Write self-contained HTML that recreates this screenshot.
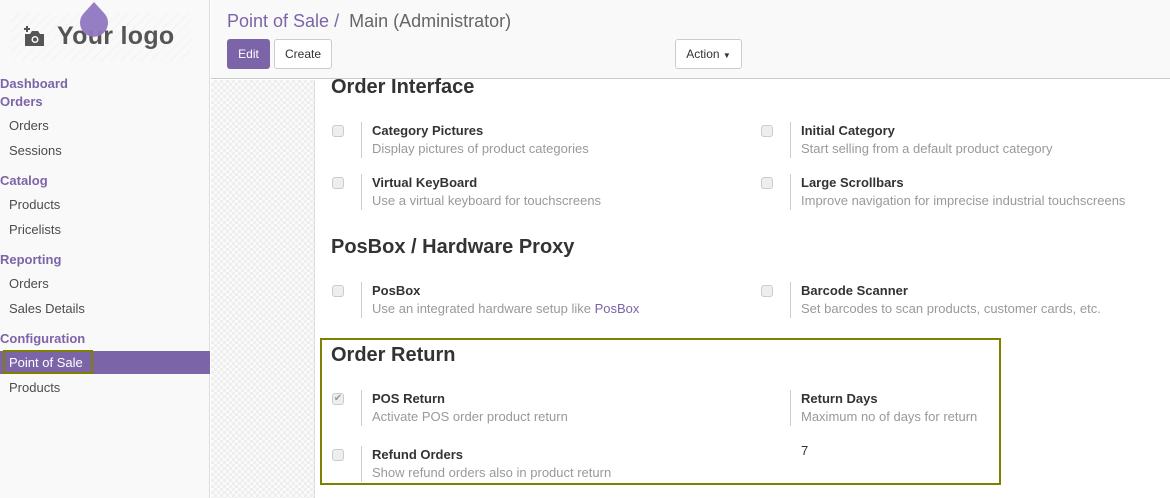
<!DOCTYPE html>
<html><head><style>
*{margin:0;padding:0;box-sizing:border-box}
body{width:1170px;height:498px;overflow:hidden;font-family:"Liberation Sans",sans-serif;font-size:13px;color:#4c4c4c;position:relative;background:#fff}
.a{position:absolute;white-space:nowrap}
#side{position:absolute;left:0;top:0;width:210px;height:498px;background:#f9f9f9;border-right:1px solid #ddd}
.sh{position:absolute;left:0;color:#7c64a8;font-weight:bold;font-size:13px}
.si{position:absolute;left:9px;color:#4c4c4c;font-size:13px}
#hdr{position:absolute;left:211px;top:0;width:959px;height:79px;background:#f9f9f9;border-bottom:1px solid #ccc}
#check{position:absolute;left:211px;top:80px;width:104px;height:418px;border-right:1px solid #ddd;background-color:#fafafa;background-image:linear-gradient(45deg,#eee 25%,transparent 25%,transparent 75%,#eee 75%),linear-gradient(45deg,#eee 25%,transparent 25%,transparent 75%,#eee 75%);background-size:6px 6px;background-position:0 0,3px 3px}
h2{position:absolute;font-size:20px;font-weight:bold;color:#333;white-space:nowrap}
.cb{position:absolute;width:12px;height:12px;border:1px solid #ccc;border-radius:3px;background:#eee}
.ln{position:absolute;width:1px;height:36px;background:#ccc}
.t{position:absolute;font-weight:bold;color:#333;white-space:nowrap}
.d{position:absolute;color:#999;white-space:nowrap}
</style></head><body>
<div id="side">
 <div class="a" style="left:11px;top:13px;width:180px;height:48px;background:repeating-linear-gradient(135deg,#f9f9f9 0 6px,#f2f2f2 6px 7px)"></div>
 <svg class="a" style="left:23px;top:25px" width="24" height="24" viewBox="0 0 24 24"><path d="M2 9h5l2-3h6l2 3h4v12H2z" fill="#555"/><circle cx="12" cy="14.5" r="3.5" fill="#f9f9f9"/><circle cx="12" cy="14.5" r="2" fill="#555"/><path d="M1 4h6M4 1v6" stroke="#555" stroke-width="2"/></svg>
 <div class="a" style="left:57px;top:22px;font-size:25px;font-weight:bold;color:#555;letter-spacing:0.3px">Your logo</div>
 <svg class="a" style="left:79px;top:1px" width="30" height="36" viewBox="0 0 30 36"><path d="M15 1 L25 12 A14 14 0 1 1 5 12 Z" fill="#8f77c0" opacity=".95"/></svg>
 <div class="sh" style="top:76px">Dashboard</div>
 <div class="sh" style="top:94px">Orders</div>
 <div class="si" style="top:118px">Orders</div>
 <div class="si" style="top:143px">Sessions</div>
 <div class="sh" style="top:173px">Catalog</div>
 <div class="si" style="top:197px">Products</div>
 <div class="si" style="top:222px">Pricelists</div>
 <div class="sh" style="top:252px">Reporting</div>
 <div class="si" style="top:276px">Orders</div>
 <div class="si" style="top:301px">Sales Details</div>
 <div class="sh" style="top:331px">Configuration</div>
 <div class="a" style="left:0;top:351px;width:210px;height:23px;background:#7c64a8"></div>
 <div class="a" style="left:3px;top:350px;width:90px;height:24px;border:2px solid #808000"></div>
 <div class="si" style="top:355px;color:#fff">Point of Sale</div>
 <div class="si" style="top:380px">Products</div>
</div>
<div id="hdr">
 <div class="a" style="left:16px;top:11px;font-size:18px;color:#7c64a8">Point of Sale / <span style="color:#666">&nbsp;Main (Administrator)</span></div>
 <div class="a" style="left:16px;top:39px;width:43px;height:30px;background:#7c64a8;border-radius:3px;color:#fff;font-size:12px;text-align:center;line-height:30px">Edit</div>
 <div class="a" style="left:63px;top:39px;width:58px;height:30px;background:#fff;border:1px solid #ccc;border-radius:3px;color:#333;font-size:12px;text-align:center;line-height:28px">Create</div>
 <div class="a" style="left:464px;top:39px;width:67px;height:30px;background:#fff;border:1px solid #ccc;border-radius:3px;color:#333;font-size:12px;text-align:center;line-height:28px">Action <span style="font-size:8px">▼</span></div>
</div>
<div id="check"></div>
<h2 style="left:331px;top:76px">Order Interface</h2>
<div class="cb" style="left:332px;top:125px"></div><div class="ln" style="left:361px;top:122px"></div>
<div class="t" style="left:372px;top:123px">Category Pictures</div><div class="d" style="left:372px;top:141px">Display pictures of product categories</div>
<div class="cb" style="left:761px;top:125px"></div><div class="ln" style="left:790px;top:122px"></div>
<div class="t" style="left:801px;top:123px">Initial Category</div><div class="d" style="left:801px;top:141px">Start selling from a default product category</div>
<div class="cb" style="left:332px;top:177px"></div><div class="ln" style="left:361px;top:174px"></div>
<div class="t" style="left:372px;top:175px">Virtual KeyBoard</div><div class="d" style="left:372px;top:193px">Use a virtual keyboard for touchscreens</div>
<div class="cb" style="left:761px;top:177px"></div><div class="ln" style="left:790px;top:174px"></div>
<div class="t" style="left:801px;top:175px">Large Scrollbars</div><div class="d" style="left:801px;top:193px">Improve navigation for imprecise industrial touchscreens</div>
<h2 style="left:331px;top:236px">PosBox / Hardware Proxy</h2>
<div class="cb" style="left:332px;top:285px"></div><div class="ln" style="left:361px;top:282px"></div>
<div class="t" style="left:372px;top:283px">PosBox</div><div class="d" style="left:372px;top:301px">Use an integrated hardware setup like <span style="color:#7c64a8">PosBox</span></div>
<div class="cb" style="left:761px;top:285px"></div><div class="ln" style="left:790px;top:282px"></div>
<div class="t" style="left:801px;top:283px">Barcode Scanner</div><div class="d" style="left:801px;top:301px">Set barcodes to scan products, customer cards, etc.</div>
<div class="a" style="left:320px;top:338px;width:681px;height:147px;border:2px solid #808000"></div>
<h2 style="left:331px;top:344px">Order Return</h2>
<div class="cb" style="left:332px;top:393px;color:#999;font-size:10px;line-height:10px;text-align:center">✔</div><div class="ln" style="left:361px;top:390px"></div>
<div class="t" style="left:372px;top:391px">POS Return</div><div class="d" style="left:372px;top:409px">Activate POS order product return</div>
<div class="ln" style="left:790px;top:390px"></div>
<div class="t" style="left:801px;top:391px">Return Days</div><div class="d" style="left:801px;top:409px">Maximum no of days for return</div>
<div class="a" style="left:801px;top:443px;color:#333">7</div>
<div class="cb" style="left:332px;top:449px"></div><div class="ln" style="left:361px;top:446px"></div>
<div class="t" style="left:372px;top:447px">Refund Orders</div><div class="d" style="left:372px;top:465px">Show refund orders also in product return</div>
</body></html>
